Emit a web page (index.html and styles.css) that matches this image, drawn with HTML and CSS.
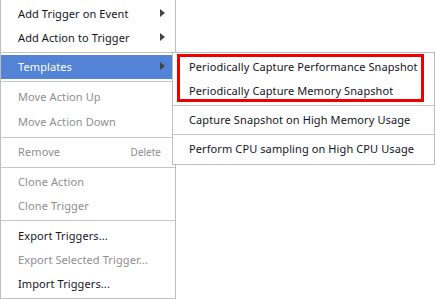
FILE: index.html
```html
<!DOCTYPE html>
<html lang="en">
<head>
    <meta charset="UTF-8">
    <title>Trigger menu</title>
    <link rel="stylesheet" href="styles.css">
</head>
<body>
    <div class="menus">
        <!-- main context menu -->
        <div class="menu main">
            <div class="group first">
                <div class="item"><span class="label">Add Trigger on Event</span><span class="arrow"></span></div>
                <div class="item"><span class="label">Add Action to Trigger</span><span class="arrow"></span></div>
            </div>
            <div class="group">
                <div class="item active"><span class="label">Templates</span><span class="arrow"></span></div>
            </div>
            <div class="group moves">
                <div class="item off"><span class="label">Move Action Up</span></div>
                <div class="item off"><span class="label">Move Action Down</span></div>
            </div>
            <div class="group">
                <div class="item off tall"><span class="label">Remove</span><span class="key">Delete</span></div>
            </div>
            <div class="group">
                <div class="item off"><span class="label">Clone Action</span></div>
                <div class="item off"><span class="label">Clone Trigger</span></div>
            </div>
            <div class="group last">
                <div class="item"><span class="label">Export Triggers...</span></div>
                <div class="item off"><span class="label">Export Selected Trigger...</span></div>
                <div class="item"><span class="label">Import Triggers...</span></div>
            </div>
        </div>

        <!-- Templates submenu -->
        <div class="menu sub">
            <div class="item"><span class="label">Periodically Capture Performance Snapshot</span></div>
            <div class="item"><span class="label">Periodically Capture Memory Snapshot</span></div>
            <div class="sep"></div>
            <div class="item"><span class="label">Capture Snapshot on High Memory Usage</span></div>
            <div class="sep"></div>
            <div class="item"><span class="label">Perform CPU sampling on High CPU Usage</span></div>
            <div class="mark"></div>
        </div>
    </div>
</body>
</html>
```

FILE: styles.css
```css
body {
    margin: 0;
    background: #ffffff;
    font-family: "Noto Sans", "Open Sans", sans-serif;
    font-size: 11px;
    letter-spacing: 0.1px;
    color: #14141e;
}

.menus {
    position: relative;
    width: 436px;
    height: 299px;
}

.menu {
    background: #ffffff;
    box-sizing: border-box;
}

.main {
    width: 176px;
    border: 1px solid #bdbdbd;
    border-top: none;
}

.group {
    padding: 2px 0;
    border-top: 1px solid #c6c6c6;
}

.group.first {
    border-top: none;
}

.group.moves {
    padding-top: 3px;
}

.group.last {
    padding-top: 3px;
    padding-bottom: 2px;
}

.item {
    display: flex;
    align-items: center;
    box-sizing: border-box;
    height: 24px;
    padding: 0 10px 2px 17px; /* text sits a pixel high, like the original */
    white-space: nowrap;
}

.moves .item,
.item.tall {
    height: 25px;
}

.label {
    flex: 1;
}

.item.off {
    color: #8e8e8e;
}

.item.active {
    background: #5283d6;
    color: #ffffff;
}

.arrow {
    width: 0;
    height: 0;
    border-left: 5px solid #444444;
    border-top: 4px solid transparent;
    border-bottom: 4px solid transparent;
}

.key {
    font-size: 10px;
    letter-spacing: 0;
    margin-right: 4px;
    color: #8e8e8e;
}

/* submenu sits over the main menu */
.sub {
    position: absolute;
    left: 172px;
    top: 52px;
    width: 263px;
    border: 1px solid #bdbdbd;
    padding: 2px 0 3px;
}

.sub .item {
    padding-left: 16px;
}

.sep {
    height: 1px;
    margin: 2px 0;
    background: #c6c6c6;
}

/* red highlight around the first two templates */
.mark {
    position: absolute;
    left: 4px;
    top: 1px;
    width: 247px;
    height: 48px;
    box-sizing: border-box;
    border: 3px solid #ee0000;
}
```
